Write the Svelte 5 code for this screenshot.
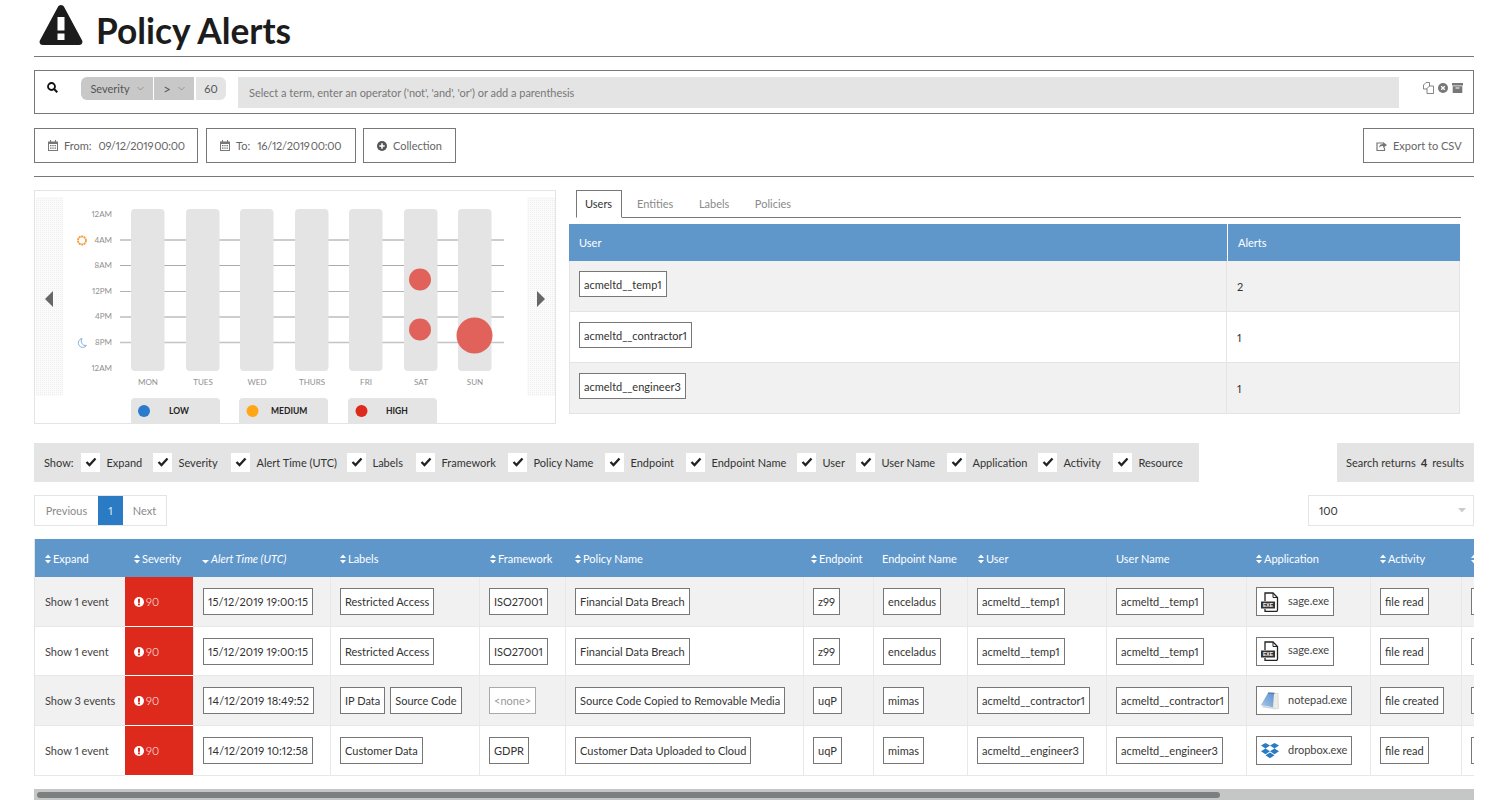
<script>
  const showItems = [['Expand',72],['Severity',78],['Alert Time (UTC)',116],['Labels',69],['Framework',92],['Policy Name',97],['Endpoint',81],['Endpoint Name',111],['User',59],['User Name',91],['Application',91],['Activity',75],['Resource',80]];
  const users = [['acmeltd__temp1','2'],['acmeltd__contractor1','1'],['acmeltd__engineer3','1']];
  const columns = [
    {t:'Expand',w:90,s:1,p:10},{t:'Severity',w:68,s:1,p:9},{t:'Alert Time (UTC)',w:137,s:2,p:9},{t:'Labels',w:149,s:1,p:10},
    {t:'Framework',w:86,s:1,p:11},{t:'Policy Name',w:238,s:1,p:10},{t:'Endpoint',w:70,s:1,p:8},{t:'Endpoint Name',w:94,s:0,p:9},
    {t:'User',w:139,s:1,p:11},{t:'User Name',w:140,s:0,p:10},{t:'Application',w:124,s:1,p:10},{t:'Activity',w:91,s:1,p:10},{t:'',w:150,s:1,p:10}
  ];
  const rows = [
    {exp:'Show 1 event',time:'15/12/2019 19:00:15',labels:['Restricted Access'],fw:'ISO27001',pol:'Financial Data Breach',ep:'z99',epn:'enceladus',user:'acmeltd__temp1',app:'sage.exe',icon:'exe',act:'file read',h:50},
    {exp:'Show 1 event',time:'15/12/2019 19:00:15',labels:['Restricted Access'],fw:'ISO27001',pol:'Financial Data Breach',ep:'z99',epn:'enceladus',user:'acmeltd__temp1',app:'sage.exe',icon:'exe',act:'file read',h:49},
    {exp:'Show 3 events',time:'14/12/2019 18:49:52',labels:['IP Data','Source Code'],fw:'<none>',none:true,pol:'Source Code Copied to Removable Media',ep:'uqP',epn:'mimas',user:'acmeltd__contractor1',app:'notepad.exe',icon:'note',act:'file created',h:50},
    {exp:'Show 1 event',time:'14/12/2019 10:12:58',labels:['Customer Data'],fw:'GDPR',pol:'Customer Data Uploaded to Cloud',ep:'uqP',epn:'mimas',user:'acmeltd__engineer3',app:'dropbox.exe',icon:'drop',act:'file read',h:50}
  ];
  const bars = [131,186,240,295,349,404,458];
  const days = ['MON','TUES','WED','THURS','FRI','SAT','SUN'];
  const hours = [[214,'12AM'],[240,'4AM'],[265,'8AM'],[291,'12PM'],[316,'4PM'],[342,'8PM'],[368,'12AM']];
  const lines = [[240,'#9a9a9a',1],[265.5,'#ababab',1.2],[291.5,'#b4b4b4',1.2],[317,'#bdbdbd',1.5],[342.5,'#c4c4c4',1.5]];
  const legend = [[131,144,'#2a7bca','LOW',169],[239,252.5,'#ffa616','MEDIUM',271],[348,361.5,'#de2a1d','HIGH',386]];
</script>

{#snippet sort(s)}
  {#if s === 1}
    <svg class="sort" width="6" height="10" viewBox="0 0 6 10"><path d="M3 .5 6 4H0zM0 6h6L3 9.500z" fill="#fff"/></svg>
  {:else if s === 2}
    <svg class="sort" width="7" height="10" viewBox="0 0 7 10"><path d="M0 6h7L3.500 9.500z" fill="#fff"/></svg>
  {/if}
{/snippet}

{#snippet calendar()}
  <svg class="ic" width="10" height="11" viewBox="0 0 10 11"><path d="M2 0h1v1.500h4V0h1v1.500h2V11H0V1.500h2zM1 4v6h8V4zM2 5h1.500v1.200H2zM4.300 5h1.400v1.200H4.300zM6.500 5H8v1.200H6.500zM2 7.500h1.500v1.200H2zM4.300 7.500h1.400v1.200H4.300zM6.500 7.500H8v1.200H6.500z" fill="#777" fill-rule="evenodd"/></svg>
{/snippet}

{#snippet alertIcon()}
  <svg class="alert-ic" width="10" height="10" viewBox="0 0 10 10"><circle cx="5" cy="5" r="5" fill="#fff"/><rect x="4" y="1.800" width="2" height="4" fill="#de2a1d"/><rect x="4" y="6.500" width="2" height="1.800" fill="#de2a1d"/></svg>
{/snippet}

<div class="page">
  <header class="title">
    <svg width="44" height="41" viewBox="0 0 44 41"><path d="M22 1c1.300 0 2.400.7 3 1.800l18 33.500c1.200 2.200-.3 4.700-3 4.700H4c-2.700 0-4.200-2.500-3-4.700L19 2.800C19.600 1.700 20.700 1 22 1zM18.500 13v13.500h7V13zM18.500 29.500v6.500h7v-6.500z" fill="#1c1c1c" fill-rule="evenodd"/></svg>
    <h1>Policy Alerts</h1>
  </header>

  <section class="search">
    <svg class="search-ic" width="11" height="11" viewBox="0 0 11 11"><circle cx="4.500" cy="4.500" r="3.500" fill="none" stroke="#111" stroke-width="1.800"/><path d="M7 7l3.300 3.300" stroke="#111" stroke-width="2"/></svg>
    <div class="pills">
      <span class="pill p1">Severity <svg width="7" height="5" viewBox="0 0 7 5"><path d="M.5 1l3 3 3-3" fill="none" stroke="#888" stroke-width=".8"/></svg></span>
      <span class="pill p2"><span class="gt">&gt;</span> <svg width="7" height="5" viewBox="0 0 7 5"><path d="M.5 1l3 3 3-3" fill="none" stroke="#888" stroke-width=".8"/></svg></span>
      <span class="pill p3">60</span>
    </div>
    <div class="term">Select a term, enter an operator ('not', 'and', 'or') or add a parenthesis</div>
    <div class="tools">
      <svg width="11" height="12" viewBox="0 0 11 12"><path d="M3 .5h3.500V7H.5V3z" fill="#fff" stroke="#777" stroke-width=".9"/><path d="M6.500 4h4v7.500H4V6.500z" fill="#fff" stroke="#777" stroke-width=".9"/></svg>
      <svg width="10" height="10" viewBox="0 0 10 10"><circle cx="5" cy="5" r="5" fill="#777"/><path d="M3.200 3.200l3.600 3.600M6.800 3.200L3.200 6.800" stroke="#fff" stroke-width="1.300"/></svg>
      <svg width="11" height="10" viewBox="0 0 11 10"><path d="M0 0h11v2.500H0zM.7 3.200h9.600V10H.7zM3.500 4.500v1h4v-1z" fill="#777" fill-rule="evenodd"/></svg>
    </div>
  </section>

  <section class="actions">
    <button class="b-from">{@render calendar()}<span>From:</span><span class="val">09/12/2019 00:00</span></button>
    <button class="b-to">{@render calendar()}<span>To:</span><span class="val">16/12/2019 00:00</span></button>
    <button class="b-col"><svg class="ic" width="10" height="10" viewBox="0 0 10 10"><circle cx="5" cy="5" r="5" fill="#555"/><path d="M5 2.300v5.400M2.300 5h5.400" stroke="#fff" stroke-width="1.600"/></svg><span>Collection</span></button>
    <button class="b-exp"><svg class="ic" width="11" height="10" viewBox="0 0 11 10"><path d="M7 2H1v7.500h7.500V6.500" fill="none" stroke="#777" stroke-width="1.200"/><path d="M3 6.500C3 4 5 3 7 3V1l4 3-4 3V5C5 5 4 5.500 3 6.500z" fill="#777"/></svg><span>Export to CSV</span></button>
  </section>

  <section class="mid">
    <div class="chart">
      <svg width="522" height="234" viewBox="34 190 522 234">
        <defs><pattern id="stip" width="2" height="2" patternUnits="userSpaceOnUse"><rect width="2" height="2" fill="#fbfbfb"/><rect width="1" height="1" fill="#eeeeee"/></pattern></defs>
        <rect x="36" y="197" width="27" height="199" fill="url(#stip)"/>
        <rect x="527" y="197" width="28" height="199" fill="url(#stip)"/>
        <path d="M53 291v16l-8-8z" fill="#666"/>
        <path d="M537 291v16l8-8z" fill="#666"/>
        {#each lines as l}<line x1="120" x2="504" y1={l[0]} y2={l[0]} stroke={l[1]} stroke-width={l[2]}/>{/each}
        {#each bars as x, i}
          <rect x={x} y="209" width="33.500" height="162" rx="4" fill="#e4e4e4"/>
          <text x={x + 17} y="385" text-anchor="middle" class="ax">{days[i]}</text>
        {/each}
        {#each hours as h}<text x="112" y={h[0] + 3} text-anchor="end" class="ax small">{h[1]}</text>{/each}
        <circle cx="82" cy="240.500" r="4" fill="none" stroke="#f39c3d" stroke-width="1.800" stroke-dasharray="2 .5"/>
        <path d="M82 338.500a4.500 4.500 0 1 0 4.500 7 4.500 4.500 0 0 1-4.500-7z" fill="none" stroke="#7aa9d6" stroke-width=".9"/>
        <circle cx="420" cy="279.500" r="11" fill="#e0625b"/>
        <circle cx="420" cy="329.500" r="11" fill="#e0625b"/>
        <circle cx="474.500" cy="335.500" r="18" fill="#e0625b"/>
        {#each legend as l}
          <path d="M{l[0]} 424v-22a4 4 0 0 1 4-4h81a4 4 0 0 1 4 4v22z" fill="#e4e4e4"/>
          <circle cx={l[1]} cy="411" r="6" fill={l[2]}/>
          <text x={l[4]} y="414" class="leg">{l[3]}</text>
        {/each}
      </svg>
    </div>
    <div class="right">
      <nav class="tabs">
        <span class="tab active">Users</span><span class="tab">Entities</span><span class="tab">Labels</span><span class="tab">Policies</span>
      </nav>
      <table class="users">
        <colgroup><col style="width:658px"/><col/></colgroup>
        <thead><tr><th>User</th><th>Alerts</th></tr></thead>
        <tbody>
          {#each users as u}
            <tr><td><span class="chip">{u[0]}</span></td><td>{u[1]}</td></tr>
          {/each}
        </tbody>
      </table>
    </div>
  </section>

  <section class="showrow">
    <div class="show">
      <span class="show-label">Show:</span>
      {#each showItems as s}
        <span class="opt" style="width:{s[1]}px"><span class="cb"><svg width="12" height="10" viewBox="0 0 12 10"><path d="M1.500 5l3 3 6-6.500" fill="none" stroke="#222" stroke-width="2.300"/></svg></span>{s[0]}</span>
      {/each}
    </div>
    <div class="returns">Search returns<b>4</b>results</div>
  </section>

  <section class="pager-row">
    <div class="pager"><span>Previous</span><span class="cur">1</span><span>Next</span></div>
    <div class="select">100<svg width="8" height="5" viewBox="0 0 8 5"><path d="M0 0h8L4 4.500z" fill="#ccc"/></svg></div>
  </section>

  <div class="table-wrap">
    <table class="alerts">
      <colgroup>{#each columns as c}<col style="width:{c.w}px"/>{/each}</colgroup>
      <thead>
        <tr>{#each columns as c}<th class:sorted={c.s === 2} style="padding-left:{c.p}px">{@render sort(c.s)}{c.t}</th>{/each}</tr>
      </thead>
      <tbody>
        {#each rows as r}
          <tr style="height:{r.h}px">
            <td class="exp">{r.exp}</td>
            <td class="sev">{@render alertIcon()}90</td>
            <td><span class="chip time">{r.time}</span></td>
            <td>{#each r.labels as l}<span class="chip lab">{l}</span>{/each}</td>
            <td><span class="chip" class:none={r.none}>{r.fw}</span></td>
            <td><span class="chip">{r.pol}</span></td>
            <td><span class="chip">{r.ep}</span></td>
            <td><span class="chip">{r.epn}</span></td>
            <td><span class="chip">{r.user}</span></td>
            <td><span class="chip">{r.user}</span></td>
            <td>
              <span class="chip app">
                {#if r.icon === 'exe'}
                  <svg width="18" height="20" viewBox="0 0 18 20"><path d="M4 9V1h8l4.500 4.500V18a1.500 1.500 0 0 1-1.500 1.500H4V17" fill="#fff" stroke="#222" stroke-width="1.300"/><path d="M12 1v4.500h4.500" fill="none" stroke="#222"/><rect x="0" y="9.500" width="14" height="7" fill="#333"/><text x="7" y="15.200" text-anchor="middle" class="exe">EXE</text></svg>
                {:else if r.icon === 'note'}
                  <svg width="18" height="18" viewBox="0 0 18 18"><defs><linearGradient id="pad" x1="0" y1="1" x2="1" y2="0"><stop offset="0" stop-color="#a9c8ea"/><stop offset="1" stop-color="#5e92cf"/></linearGradient></defs><path d="M7 1l10 .5.500 15-5 .5z" fill="#ecebe4" stroke="#c4c4bc" stroke-width=".5"/><path d="M7 1h6L12 15.500 0 13z" fill="url(#pad)"/><path d="M0 13l12 2.500 1 1.500-11-1.500z" fill="#cfd6dc"/><path d="M7 1l6.500.3" stroke="#4d77a8" stroke-width="1.200"/></svg>
                {:else}
                  <svg width="18" height="20" viewBox="0 0 20 20"><path d="M5 1l5 3-5 3.200L0 4zM15 1l5 3-5 3.200L10 4zM5 7.200l5 3.200-5 3.100-5-3.100zM15 7.200l5 3.200-5 3.100-5-3.100zM5 14.600l5-3 5 3-5 3.400-5-3.400z" fill="#2a7bc4"/></svg>
                {/if}
                <span>{r.app}</span>
              </span>
            </td>
            <td><span class="chip">{r.act}</span></td>
            <td><span class="chip blank"></span></td>
          </tr>
        {/each}
      </tbody>
    </table>
  </div>
  <div class="hscroll"><div class="thumb"></div></div>
</div>

<style>
  :global(body) { margin: 0; background: #fff; overflow: hidden; }
  .page { padding: 0 24px 0 34px; width: 1440px; font-family: Lato, "Liberation Sans", sans-serif; font-size: 11px; color: #333; font-variant-numeric: proportional-nums; }
  .title { box-sizing: border-box; border-bottom: 1px solid #777; display: flex; align-items: flex-start; padding: 4px 0 0 5px; gap: 13px; height: 57px; }
  h1 { margin: 6px 0 0; font-size: 35.300px; line-height: 42px; font-weight: 700; color: #1c1c1c; }

  .search { margin-top: 13px; height: 44px; box-sizing: border-box; border: 1px solid #777; display: flex; align-items: flex-start; padding: 6px 10px 0 12px; }
  .search-ic { margin-top: 5px; margin-right: 23px; }
  .pills { display: flex; height: 23px; width: 146px; margin-right: 11px; flex: none; }
  .pill { display: flex; align-items: center; justify-content: center; gap: 7px; color: #555; background: #c8c8c8; }
  .gt { font-size: 13px; }
  .p1 { width: 72px; border-radius: 6px 0 0 6px; }
  .p2 { width: 40px; margin-left: 1px; }
  .p3 { width: 30px; margin-left: 2px; background: #e4e4e4; border-radius: 0 6px 6px 0; }
  .term { flex: none; width: 1161px; height: 31px; line-height: 31px; padding-left: 11px; box-sizing: border-box; background: #e4e4e4; color: #777; letter-spacing: -.02px; }
  .tools { display: flex; align-items: center; gap: 4px; margin-left: 24px; margin-top: 5px; }

  .actions { display: flex; gap: 8px; margin-top: 14px; height: 48px; border-bottom: 1px solid #777; align-items: flex-start; }
  button { height: 35px; box-sizing: border-box; border: 1px solid #777; background: #fff; font: inherit; font-variant-numeric: proportional-nums; color: #666; display: flex; align-items: center; padding: 0; }
  .ic { flex: none; }
  .b-from { width: 164px; padding-left: 13px; }
  .b-to { width: 150px; padding-left: 13px; }
  .b-col { width: 93px; padding-left: 13px; margin-left: -1px; }
  .b-exp { width: 111px; padding-left: 12px; margin-left: auto; }
  button .ic + span { margin-left: 6px; }
  .val { margin-left: 7px; letter-spacing: -.25px; word-spacing: -1.500px; }

  .mid { display: flex; margin-top: 13px; }
  .chart { width: 522px; height: 234px; box-sizing: border-box; border: 1px solid #e4e4e4; position: relative; flex: none; overflow: hidden; }
  .chart svg { position: absolute; left: -1px; top: -1px; }
  .ax { font-family: Lato, sans-serif; font-size: 8px; fill: #909090; }
  .leg { font-family: Lato, sans-serif; font-size: 8.500px; font-weight: 700; fill: #222; }
  .right { margin-left: 13px; width: 892px; }
  .tabs { margin-left: 7px; height: 27px; width: 885px; border-bottom: 1px solid #777; display: flex; }
  .tab { height: 27px; line-height: 27px; padding: 0 9px; margin-right: 7.500px; color: #8a8a8a; box-sizing: border-box; }
  .tab.active { color: #333; border: 1px solid #777; border-bottom: 1px solid #fff; height: 28px; width: 46px; margin-right: 6px; padding: 0 8px; line-height: 26px; }
  .users { margin-top: 6px; border-collapse: separate; border-spacing: 0; table-layout: fixed; width: 891px; }
  .users th { background: #6097cb; color: #fff; font-weight: 400; text-align: left; height: 37px; padding: 0 0 0 10px; box-sizing: border-box; }
  .users th + th { border-left: 1px solid #fff; }
  .users td { height: 51px; padding: 0 0 0 10px; box-sizing: border-box; border-bottom: 1px solid #e4e4e4; border-right: 1px solid #e4e4e4; color: #333; }
  .users td:first-child { border-left: 1px solid #e4e4e4; padding-left: 9px; }
  .users tr:nth-child(odd) td { background: #f1f1f1; }
  .users .chip { height: 26px; margin-bottom: 4px; }

  .chip { display: inline-flex; align-items: center; height: 27px; box-sizing: border-box; border: 1px solid #777; padding: 0 4px; background: #fff; color: #333; white-space: nowrap; vertical-align: middle; }
  .chip.time { letter-spacing: .1px; }
  .chip.lab + .chip.lab { margin-left: 5px; }
  .chip.none { color: #999; border-color: #aaa; }
  .chip.blank { width: 40px; }
  .chip.app { height: 29px; padding: 0 4px; gap: 9px; color: #444; }
  .chip.app span { margin-top: -3px; }
  .exe { font-family: "Liberation Sans", sans-serif; font-size: 5px; font-weight: 700; fill: #fff; }

  .showrow { display: flex; justify-content: space-between; margin-top: 19px; height: 39px; }
  .show { width: 1165px; background: #e4e4e4; display: flex; align-items: center; padding: 0 0 1px 10px; box-sizing: border-box; color: #333; white-space: nowrap; }
  .show-label { width: 37px; flex: none; }
  .opt { display: flex; align-items: center; flex: none; }
  .cb { width: 19px; height: 19px; background: #fff; margin-right: 6.500px; display: flex; align-items: center; justify-content: center; }
  .returns { width: 137px; background: #e4e4e4; display: flex; align-items: center; padding-left: 9px; box-sizing: border-box; white-space: pre; }
  .returns b { margin: 0 5px; }

  .pager-row { display: flex; justify-content: space-between; margin-top: 13px; height: 31px; }
  .pager { display: flex; height: 31px; box-sizing: border-box; border: 1px solid #e4e4e4; width: 133px; color: #8a8a8a; align-items: stretch; }
  .pager span { display: flex; align-items: center; justify-content: center; width: 25px; }
  .pager span:first-child { width: 63px; }
  .pager span:last-child { flex: 1; }
  .pager .cur { background: #2a7bc4; color: #dfe8f2; }
  .select { width: 166px; height: 31px; box-sizing: border-box; border: 1px solid #e4e4e4; display: flex; align-items: center; justify-content: space-between; padding: 0 7px 0 10px; color: #333; }

  .table-wrap { margin-top: 13px; width: 1440px; overflow: hidden; }
  .alerts { border-collapse: separate; border-spacing: 0; table-layout: fixed; width: 1577px; border-left: 1px solid #e4e4e4; }
  .alerts th { background: #6097cb; color: #fff; height: 38px; box-sizing: border-box; font-weight: 400; text-align: left; padding: 0 0 0 10px; white-space: nowrap; overflow: hidden; }
  .alerts th.sorted { font-style: italic; }
  .sort { margin-right: 2px; vertical-align: -1px; }
  .alerts td { box-sizing: border-box; padding: 0 0 0 9px; border-bottom: 1px solid #e8e8e8; border-left: 1px solid #e8e8e8; white-space: nowrap; color: #444; }
  .alerts td:first-child { border-left: none; padding-left: 10px; }
  .alerts tbody tr:nth-child(odd) td { background: #f1f1f1; }
  .alerts td.sev { background: #de2a1d !important; color: #fff; padding-left: 9px; border-left: none; border-bottom: 1px solid #fff; font-weight: 300; }
  .alert-ic { margin-right: 2px; vertical-align: -1px; }

  .hscroll { margin-top: 13px; width: 1440px; height: 11px; background: #c5c7c6; position: relative; }
  .thumb { position: absolute; left: 3px; top: 3px; width: 1183px; height: 6px; border-radius: 3px; background: #7b7f80; }
</style>
